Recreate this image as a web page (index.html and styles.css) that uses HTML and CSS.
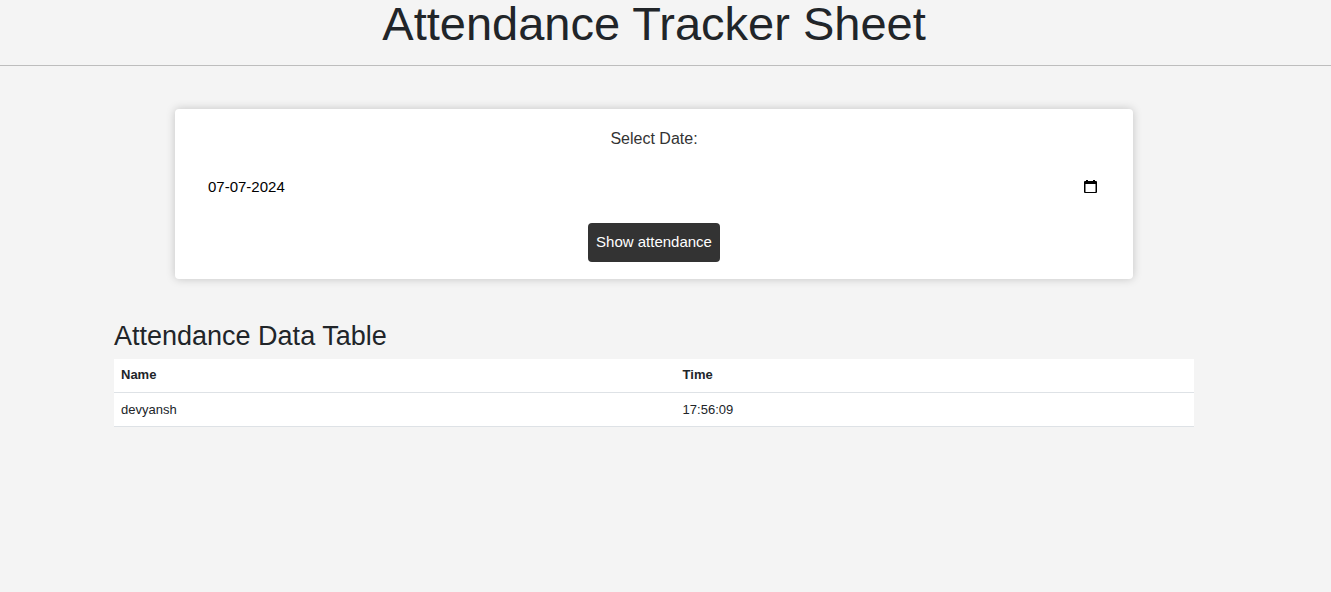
FILE: index.html
```html
<!DOCTYPE html>
<html lang="en">
<head>
<meta charset="utf-8">
<title>Attendance Tracker Sheet</title>
<link rel="stylesheet" href="styles.css">
</head>
<body>
<header class="page-header">
  <h1 class="page-title">Attendance Tracker Sheet</h1>
</header>
<main class="content">
  <form class="date-form">
    <label class="date-label" for="date">Select Date:</label>
    <div class="date-field">
      <input class="date-input" id="date" type="text" value="07-07-2024">
      <button class="picker" type="button" aria-label="Open calendar">
        <svg class="picker-icon" viewBox="0 0 15 15" aria-hidden="true">
          <path d="M3 1h2v1h5V1h2v1h1q1 0 1 1v10q0 1-1 1H2q-1 0-1-1V3q0-1 1-1h1zM2.500 5v8h10V5z" fill-rule="evenodd"/>
        </svg>
      </button>
    </div>
    <button class="submit" type="button">Show attendance</button>
  </form>
  <section class="records">
    <h2 class="records-title">Attendance Data Table</h2>
    <table class="records-table">
      <thead><tr><th class="name-col" scope="col">Name</th><th scope="col">Time</th></tr></thead>
      <tbody><tr><td>devyansh</td><td>17:56:09</td></tr></tbody>
    </table>
  </section>
</main>
</body>
</html>
```
FILE: styles.css
```css
* { box-sizing: border-box; }
body {
  margin: 0;
  background: #f4f4f4;
  color: #212529;
  font-family: "Liberation Sans", Arial, sans-serif;
}
.page-header {
  padding: 0 23px 18px 0;
  border-bottom: 1px solid #bdbdbd;
}
.page-title {
  margin: 0;
  font-size: 47px;
  font-weight: 400;
  line-height: 47px;
  text-align: center;
}
.content {
  max-width: 1103px;
  margin: 0 auto;
  padding: 43px 23px 0 0;
}
.date-form {
  display: flex;
  flex-direction: column;
  align-items: center;
  margin: 0 61px;
  padding: 18px 18px 17px;
  border-radius: 4px;
  background: #fff;
  box-shadow: 0 0 10px rgba(0, 0, 0, 0.2);
}
.date-label {
  color: #333;
  font-size: 16px;
  line-height: 24px;
}
.date-field {
  display: flex;
  align-items: center;
  align-self: stretch;
  margin: 17px 0;
  padding: 8px 17px 8px 15px;
}
.date-input {
  flex: 1;
  min-width: 0;
  padding: 0;
  border: 0;
  background: transparent;
  color: #000;
  font: 15px/22px "Liberation Sans", Arial, sans-serif;
}
.picker {
  display: flex;
  padding: 0 0 2px;
  border: 0;
  background: transparent;
}
.picker-icon {
  width: 15px;
  height: 15px;
}
.submit {
  padding: 7px 8px 9px;
  border: 0;
  border-radius: 4px;
  background: #333;
  color: #fff;
  font: 15px/23px "Liberation Sans", Arial, sans-serif;
}
.records {
  margin-top: 41px;
}
.records-title {
  margin: 0 0 7px;
  font-size: 27px;
  font-weight: 400;
  line-height: 32px;
}
.records-table {
  width: 100%;
  border-collapse: collapse;
  background: #fff;
  font-size: 13px;
  line-height: 19px;
}
.records-table th,
.records-table td {
  padding: 7px;
  border-bottom: 1px solid #dee2e6;
  text-align: left;
}
.records-table th {
  padding: 6px 7px 8px;
}
.name-col {
  width: 52%;
}
```
